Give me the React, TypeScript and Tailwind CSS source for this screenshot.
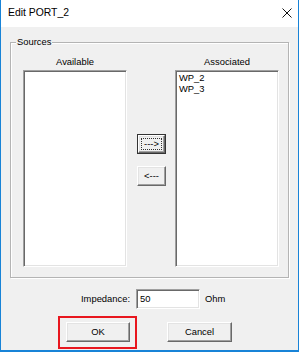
import React from "react";

const raised =
  "bg-[#f0f0f0] border border-t-white border-l-white border-b-[#696969] border-r-[#696969] shadow-[inset_-1px_-1px_0_#a0a0a0,inset_1px_1px_0_#e3e3e3]";
const sunken =
  "bg-white border border-t-[#a0a0a0] border-l-[#a0a0a0] border-b-white border-r-white shadow-[inset_1px_1px_0_#696969,inset_-1px_-1px_0_#e3e3e3]";

function ListBox({ label, items }: { label: string; items: string[] }) {
  return (
    <div className="flex w-[104px] flex-col">
      <div className="mb-[2px] text-center leading-[12px]">{label}</div>
      <div className={`${sunken} h-[197px] px-[3px] py-[2px]`}>
        {items.map((it) => (
          <div key={it} className="leading-[10.5px]">
            {it}
          </div>
        ))}
      </div>
    </div>
  );
}

export default function App() {
  return (
    <div
      className="h-[352px] w-[300px] overflow-hidden bg-white text-[9.4px] text-black"
      style={{ fontFamily: '"Liberation Sans", Arial, sans-serif' }}
    >
      <div className="flex h-[352px] w-[299px] flex-col border-x border-b-2 border-[#1883d7]">
        {/* title bar */}
        <div className="flex h-[27px] shrink-0 items-center justify-between bg-white pl-[7px] pr-[5px]">
          <span className="pb-[1px] text-[10.4px]">Edit PORT_2</span>
          <svg width="10" height="10" viewBox="0 0 10 10" className="mb-[1px] mr-[1px]">
            <path d="M0.5 0.5 L9.5 9.5 M9.5 0.5 L0.5 9.5" stroke="#111" strokeWidth="1" />
          </svg>
        </div>

        {/* body */}
        <div className="flex flex-1 flex-col bg-[#f0f0f0] pl-[9px]">
          <div className="mt-[15px] flex h-[236px] w-[279px] flex-col border border-[#b4b4b4] shadow-[inset_1px_1px_0_#fff,1px_1px_0_#fff]">
            <span className="-mt-[7px] ml-[5px] w-fit bg-[#f0f0f0] px-[1px] leading-[12px]">Sources</span>
            <div className="mt-[8px] flex pl-[12px]">
              <ListBox label="Available" items={[]} />
              <div className="ml-[10px] flex w-[29px] flex-col gap-[12px] pt-[78px]">
                <div className="h-[20px] w-[29px] border border-[#333]">
                  <div className={`${raised} flex h-full items-center justify-center`}>
                    <div className="flex h-[12px] w-[21px] items-center justify-center border border-dotted border-[#333] leading-none">
                      ---&gt;
                    </div>
                  </div>
                </div>
                <div className={`${raised} flex h-[20px] w-[29px] items-center justify-center leading-none`}>
                  &lt;---
                </div>
              </div>
              <div className="ml-[9px]">
                <ListBox label="Associated" items={["WP_2", "WP_3"]} />
              </div>
            </div>
          </div>

          {/* impedance */}
          <div className="mt-[11px] flex items-center">
            <div className="w-[120px] text-right">Impedance:</div>
            <div className={`${sunken} ml-[6px] flex h-[20px] w-[64px] items-center px-[3px]`}>50</div>
            <div className="ml-[5px]">Ohm</div>
          </div>

          {/* buttons */}
          <div className="mt-[7px] flex items-start">
            <div className="ml-[48px] border-2 border-[#e8161e] pb-[5px] pl-[6px] pr-[5px] pt-[4px]">
              <div className={`${raised} flex h-[20px] w-[64px] items-center justify-center`}>OK</div>
            </div>
            <div className={`${raised} ml-[30px] mt-[6px] flex h-[20px] w-[65px] items-center justify-center`}>
              Cancel
            </div>
          </div>
        </div>
      </div>
    </div>
  );
}
